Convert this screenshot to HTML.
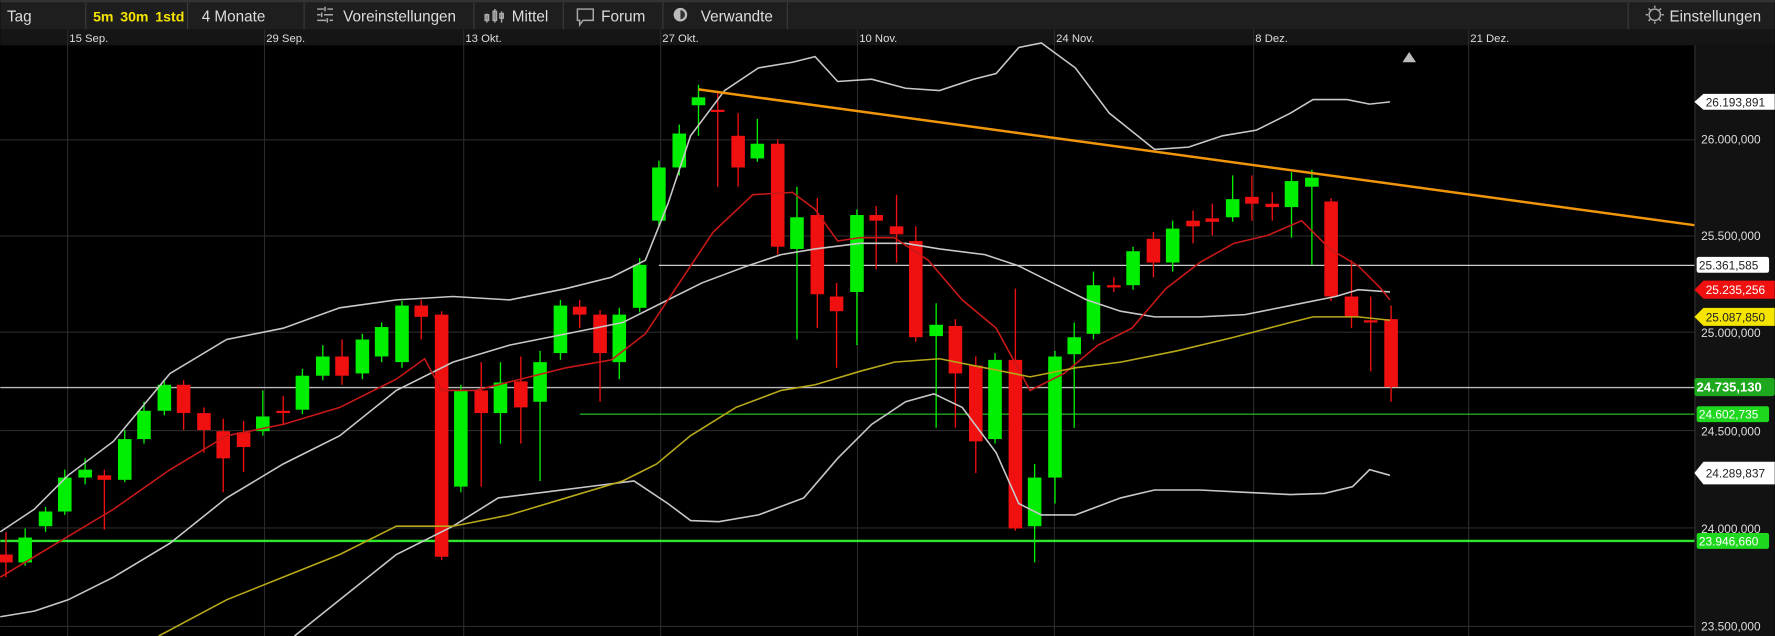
<!DOCTYPE html>
<html><head><meta charset="utf-8"><style>
html,body{margin:0;padding:0;background:#000;overflow:hidden;width:1775px;height:636px}
svg{display:block}
text{font-family:"Liberation Sans",sans-serif}
</style></head><body>
<svg id="s" width="1775" height="636" viewBox="0 0 1568 562" xmlns="http://www.w3.org/2000/svg">
<rect x="0" y="0" width="1568" height="562" fill="#000"/>
<!-- toolbar -->
<rect x="0" y="0" width="1568" height="26" fill="#1e1e1e"/>
<rect x="0" y="0" width="1568" height="2" fill="#333"/>
<rect x="0" y="26" width="1568" height="14" fill="#151515"/>
<g stroke="#3a3a3a" stroke-width="1">
<line x1="75.5" y1="2" x2="75.5" y2="26"/><line x1="165.5" y1="2" x2="165.5" y2="26"/>
<line x1="268.5" y1="2" x2="268.5" y2="26"/><line x1="418.5" y1="2" x2="418.5" y2="26"/>
<line x1="497.5" y1="2" x2="497.5" y2="26"/><line x1="585.5" y1="2" x2="585.5" y2="26"/>
<line x1="695.5" y1="2" x2="695.5" y2="26"/><line x1="1438.5" y1="2" x2="1438.5" y2="26"/>
</g>
<g font-size="13.5" fill="#ddd">
<text x="6" y="19">Tag</text>
<text x="82" y="19" fill="#f5e400" font-weight="bold" font-size="12.5">5m</text>
<text x="106" y="19" fill="#f5e400" font-weight="bold" font-size="12.5">30m</text>
<text x="137" y="19" fill="#f5e400" font-weight="bold" font-size="12.5">1std</text>
<text x="178" y="19">4 Monate</text>
<text x="303" y="19">Voreinstellungen</text>
<text x="452" y="19">Mittel</text>
<text x="531" y="19">Forum</text>
<text x="619" y="19">Verwandte</text>
<text x="1475" y="19">Einstellungen</text>
</g>
<!-- icons -->
<g stroke="#aaa" stroke-width="1.3" fill="none">
<path d="M280 8h6M289 8h5M280 13h3M286 13h8M280 18h8M291 18h3"/>
<path d="M287 6v4M284 11v4M289 16v4"/>
<path d="M430 12v8M437 8v12M443 10v10"/><rect x="428.5" y="13" width="3" height="5"/><rect x="435.5" y="10" width="3" height="8"/><rect x="441.5" y="12" width="3" height="4"/>
<path d="M510 8h14v10h-9l-3 4v-4h-2z"/>
<circle cx="1462" cy="13" r="5"/><path d="M1462 5v2M1462 19v2M1454 13h2M1468 13h2M1456.5 7.5l1.5 1.5M1466 17l1.5 1.5M1467.5 7.5L1466 9M1458 17l-1.5 1.5"/>
</g>
<circle cx="601" cy="13" r="6" fill="#bbb"/><path d="M601 9a4 4 0 0 1 0 8z" fill="#333"/>
<!-- date labels -->
<g font-size="10" fill="#ddd">
<text x="61" y="37">15 Sep.</text><text x="235" y="37">29 Sep.</text><text x="411" y="37">13 Okt.</text>
<text x="585" y="37">27 Okt.</text><text x="759" y="37">10 Nov.</text><text x="933" y="37">24 Nov.</text>
<text x="1109" y="37">8 Dez.</text><text x="1299" y="37">21 Dez.</text>
</g>
<!-- axis bg -->
<rect x="1497" y="40" width="71" height="522" fill="#121212"/>
<line x1="1497.5" y1="40" x2="1497.5" y2="562" stroke="#333"/>
<!-- grid -->
<g stroke="#2a2a2a" stroke-width="1">
<line x1="59.5" y1="26" x2="59.5" y2="562"/><line x1="233.5" y1="26" x2="233.5" y2="562"/>
<line x1="409.5" y1="26" x2="409.5" y2="562"/><line x1="583.5" y1="26" x2="583.5" y2="562"/>
<line x1="757.5" y1="26" x2="757.5" y2="562"/><line x1="931.5" y1="26" x2="931.5" y2="562"/>
<line x1="1107.5" y1="26" x2="1107.5" y2="562"/><line x1="1297.5" y1="26" x2="1297.5" y2="562"/>
<line x1="0" y1="123.5" x2="1497" y2="123.5"/><line x1="0" y1="208.5" x2="1497" y2="208.5"/>
<line x1="0" y1="293.5" x2="1497" y2="293.5"/><line x1="0" y1="380.5" x2="1497" y2="380.5"/>
<line x1="0" y1="466.5" x2="1497" y2="466.5"/><line x1="0" y1="553.5" x2="1497" y2="553.5"/>
</g>
<!-- horizontal lines -->
<line x1="582" y1="234.5" x2="1497" y2="234.5" stroke="#ccc" stroke-width="1.2"/>
<line x1="0" y1="342.5" x2="1497" y2="342.5" stroke="#bbb" stroke-width="1.2"/>
<line x1="512" y1="366" x2="1497" y2="366" stroke="#1fa81f" stroke-width="1.2"/>
<line x1="0" y1="478" x2="1497" y2="478" stroke="#2ee82e" stroke-width="2"/>
<g id="candles"></g>
<!-- indicator lines -->
<g fill="none" stroke-width="1.4">
<polyline stroke="#c8c8c8" points="0,470 30,450 60,420 100,390 150,330 200,300 250,290 300,272 350,265 400,262 450,265 500,255 540,245 570,230 590,180 610,120 640,80 670,60 700,55 720,50 740,72 770,70 800,78 830,80 860,70 880,65 900,42 920,38 950,60 980,100 1020,132 1050,130 1080,120 1110,115 1140,100 1160,88 1190,88 1210,92 1228,90"/>
<polyline stroke="#c8c8c8" points="0,545 30,540 60,530 100,510 150,480 200,440 250,410 300,385 350,345 400,320 450,305 500,295 550,285 590,265 620,250 660,235 690,225 720,220 760,215 800,215 830,220 870,225 900,235 930,250 960,265 990,275 1020,280 1060,280 1100,278 1140,270 1180,262 1200,256 1228,258"/>
<polyline stroke="#c8c8c8" points="260,562 300,530 350,490 400,465 440,440 480,435 520,430 560,425 590,445 610,460 635,461 670,455 710,440 740,405 770,375 800,355 825,348 850,360 880,400 900,445 920,455 950,455 990,440 1020,433 1060,433 1100,435 1140,437 1170,436 1195,430 1210,415 1228,420"/>
<polyline stroke="#c81818" points="0,510 50,480 100,450 150,415 200,385 250,375 300,360 350,335 375,317 390,345 420,345 460,335 500,325 540,318 570,295 600,250 630,205 665,172 700,170 720,185 740,213 760,210 790,210 820,230 850,265 880,290 910,345 940,330 970,305 1000,290 1030,255 1060,232 1090,215 1120,208 1150,195 1175,220 1200,235 1220,255 1228,265"/>
<polyline stroke="#b8a818" points="140,562 200,530 250,510 300,490 350,465 400,465 450,455 500,440 550,425 580,410 610,385 650,360 690,345 720,340 760,328 790,320 830,317 870,325 910,333 950,325 990,320 1040,310 1090,298 1140,285 1160,280 1200,280 1228,283"/>
</g>
<line x1="617" y1="79" x2="1497" y2="199" stroke="#f0960a" stroke-width="2.2"/>
<path d="M1239 55l6-9 6 9z" fill="#bbb"/>
<!-- axis labels -->
<g font-size="10.5" fill="#ddd">
<text x="1503" y="127">26.000,000</text><text x="1503" y="212">25.500,000</text>
<text x="1503" y="298">25.000,000</text><text x="1503" y="385">24.500,000</text>
<text x="1503" y="471">24.000,000</text><text x="1503" y="557">23.500,000</text>
</g>
<g font-size="10.5">
<path d="M1497 90l8-7h63v14h-63z" fill="#fff"/><text x="1507" y="94" fill="#222">26.193,891</text>
<rect x="1499" y="227" width="64" height="14" rx="2" fill="#fff"/><text x="1501" y="238" fill="#222">25.361,585</text>
<path d="M1497 256l8-8h63v16h-63z" fill="#f01010"/><text x="1507" y="260" fill="#fff">25.235,256</text>
<path d="M1497 280l8-8h63v16h-63z" fill="#f5e400"/><text x="1507" y="284" fill="#222">25.087,850</text>
<rect x="1497" y="334" width="71" height="16" rx="2" fill="#1ea81e"/><text x="1499" y="346" fill="#fff" font-weight="bold" font-size="11.5">24.735,130</text>
<rect x="1499" y="359" width="64" height="14" rx="2" fill="#1ed81e"/><text x="1501" y="370" fill="#fff">24.602,735</text>
<path d="M1497 418l8-10h63v20h-63z" fill="#fff"/><text x="1507" y="422" fill="#222">24.289,837</text>
<rect x="1499" y="471" width="64" height="14" rx="2" fill="#1ed81e"/><text x="1501" y="482" fill="#fff">23.946,660</text>
</g>
</svg>
<script>
var c=[[5,'r',490,497,470,510],[22,'g',475,497,467,500],[40,'g',452,465,448,470],[57,'g',422,452,415,455],[75,'g',415,422,405,428],[92,'r',420,424,415,468],[110,'g',388,424,380,426],[127,'g',363,388,355,392],[145,'g',340,363,335,367],[162,'r',340,365,336,380],[180,'r',365,380,360,400],[197,'r',381,405,370,435],[215,'r',382,395,372,417],[232,'g',368,381,345,385],[250,'r',363,365,350,375],[267,'g',332,362,326,366],[285,'g',315,332,305,336],[302,'r',315,332,300,340],[320,'g',300,330,295,335],[337,'g',289,315,285,320],[355,'g',270,320,266,325],[372,'r',270,280,265,300],[390,'r',278,492,275,495],[407,'g',345,430,340,435],[425,'r',345,365,320,430],[442,'g',338,365,320,392],[460,'r',337,360,315,392],[477,'g',320,355,310,425],[495,'g',270,312,265,318],[512,'r',271,278,265,290],[530,'r',278,312,274,355],[547,'g',278,320,272,335],[565,'g',234,272,228,276],[582,'g',148,195,142,200],[600,'g',118,148,110,155],[617,'g',86,93,75,120],[634,'r',97,98,80,165],[652,'r',120,148,100,165],[669,'g',127,140,105,143],[687,'r',127,218,123,225],[704,'g',192,220,165,300],[722,'r',190,260,175,290],[739,'r',262,275,250,325],[757,'g',190,258,185,305],[774,'r',190,195,182,238],[792,'r',200,207,172,232],[809,'r',213,298,200,302],[827,'g',287,297,268,378],[844,'r',288,330,282,378],[862,'r',323,390,315,418],[879,'g',318,388,312,392],[897,'r',318,467,255,469],[914,'g',422,465,410,497],[932,'g',315,422,310,445],[949,'g',298,313,285,378],[966,'g',252,295,240,300],[984,'r',252,254,245,258],[1001,'g',222,252,218,256],[1019,'r',211,232,205,245],[1036,'g',202,232,195,240],[1054,'r',195,200,186,215],[1071,'r',193,196,180,208],[1089,'g',176,192,155,196],[1106,'r',174,180,155,195],[1124,'r',180,183,170,195],[1141,'g',160,183,152,210],[1159,'g',157,165,150,234],[1176,'r',178,262,175,266],[1194,'r',262,280,230,290],[1211,'r',283,285,262,328],[1229,'r',282,342,270,355]];
var g=document.getElementById('candles'),ns='http://www.w3.org/2000/svg',h='';
c.forEach(function(k){var col=k[1]=='g'?'#00ee00':'#f01010';
h+='<line x1="'+k[0]+'" y1="'+k[4]+'" x2="'+k[0]+'" y2="'+k[5]+'" stroke="'+col+'" stroke-width="1.2"/>';
var t=Math.min(k[2],k[3]),b=Math.max(k[2],k[3]);if(b-t<2)b=t+2;
h+='<rect x="'+(k[0]-6)+'" y="'+t+'" width="12" height="'+(b-t)+'" fill="'+col+'"/>';});
g.innerHTML=h;
</script>
</body></html>
